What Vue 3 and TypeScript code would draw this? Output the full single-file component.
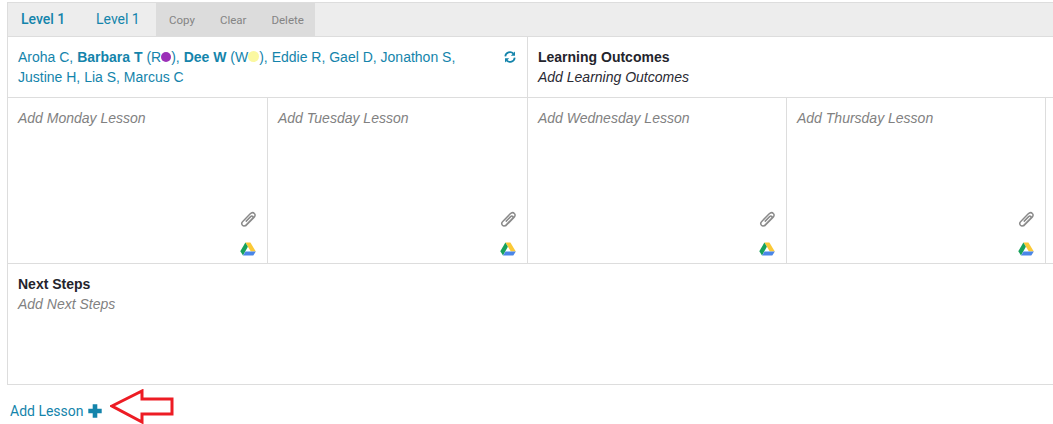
<template>
  <div class="page">
    <div class="planner">
      <div class="tabs">
        <span class="tab active">Level 1</span>
        <span class="tab">Level 1</span>
        <div class="actions">
          <span v-for="a in actions" :key="a" class="action">{{ a }}</span>
        </div>
      </div>

      <div class="top-row">
        <div class="students">
          <p class="names">
            Aroha C, <b>Barbara T</b> (R<i class="dot purple"></i>), <b>Dee W</b> (W<i class="dot yellow"></i>), Eddie R, Gael D, Jonathon S,<br />
            Justine H, Lia S, Marcus C
          </p>
          <svg class="refresh" viewBox="0 0 14 14" width="12" height="12">
            <path d="M1.5 6.2A5.5 5.5 0 0 1 11 3" fill="none" stroke="#1484ab" stroke-width="2" />
            <path d="M12.8 0.6V5.4H8z" fill="#1484ab" />
            <path d="M12.5 7.8A5.5 5.5 0 0 1 3 11" fill="none" stroke="#1484ab" stroke-width="2" />
            <path d="M1.2 13.4V8.6H6z" fill="#1484ab" />
          </svg>
        </div>
        <div class="outcomes">
          <h4>Learning Outcomes</h4>
          <p>Add Learning Outcomes</p>
        </div>
      </div>

      <div class="days">
        <div v-for="d in days" :key="d" class="day">
          <p class="placeholder">Add {{ d }} Lesson</p>
          <div class="day-icons">
            <svg class="clip" viewBox="0 0 16 16" width="17" height="17">
              <path d="M5.2 14.2 12.9 6.4C14.4 4.9 14.6 3.3 13.5 2.3 12.4 1.2 10.8 1.5 9.4 2.9L2.6 9.8C1.5 10.9 1.4 12.4 2.3 13.4 3.3 14.4 4.6 14.2 5.7 13.1L11.7 7C12.4 6.3 12.5 5.5 12 5 11.4 4.5 10.7 4.6 10 5.3L5.4 10" fill="none" stroke="#8a8a8a" stroke-width="1.4" />
            </svg>
            <svg class="drive" viewBox="0 0 16 14" width="16" height="14">
              <path d="M5.4 0.5H10.4L15.8 9.4H10.8z" fill="#fbc937" />
              <path d="M5.4 0.5 7.9 4.8 3 13.4 0.3 9.2z" fill="#17a15b" />
              <path d="M5.6 9.4H15.8L13.3 13.4H3z" fill="#4a86e8" />
            </svg>
          </div>
        </div>
        <div class="day-rest"></div>
      </div>

      <div class="next-steps">
        <h4>Next Steps</h4>
        <p class="placeholder">Add Next Steps</p>
      </div>
    </div>

    <div class="add-lesson">
      Add Lesson
      <svg viewBox="0 0 14 14" width="14" height="14">
        <path d="M4.7 0.3H9.3V4.7H13.7V9.3H9.3V13.7H4.7V9.3H0.3V4.7H4.7z" fill="#1484ab" />
      </svg>
    </div>

    <!-- annotation drawn over the screenshot -->
    <svg class="arrow" viewBox="0 0 66 36" width="66" height="36">
      <path d="M2 17 32 2V10H62V25H32V33z" fill="#fff" stroke="#ed1c24" stroke-width="3" />
    </svg>
  </div>
</template>

<script setup lang="ts">
const actions: string[] = ['Copy', 'Clear', 'Delete']
const days: string[] = ['Monday', 'Tuesday', 'Wednesday', 'Thursday']
</script>

<style>
html,
body {
  background: #fff;
  overflow: hidden;
}
</style>

<style scoped>
.page {
  position: relative;
  width: 1053px;
  height: 424px;
  padding: 2px 0 0 7px;
  box-sizing: border-box;
  font-family: "Liberation Sans", Arial, sans-serif;
  font-size: 14px;
  color: #1484ab;
  overflow: hidden;
}

p,
h4 {
  margin: 0;
}

.planner {
  border-top: 1px solid #ddd;
  border-left: 1px solid #ddd;
  border-bottom: 1px solid #ddd;
}

.tabs {
  display: flex;
  height: 33px;
  background: #ededed;
  border-bottom: 1px solid #ddd;
  font-family: Roboto, sans-serif;
}

.tab {
  box-sizing: border-box;
  padding-left: 13px;
  line-height: 32px;
}

.tab.active {
  width: 75px;
  font-weight: 500;
}

.tab + .tab {
  width: 73px;
}

.actions {
  display: flex;
  gap: 25px;
  width: 159px;
  padding-left: 13px;
  box-sizing: border-box;
  background: #dcdcdc;
}

.action {
  font-size: 11.5px;
  line-height: 34px;
  color: #848484;
}

.top-row {
  display: flex;
  height: 60px;
  border-bottom: 1px solid #ddd;
}

.students {
  position: relative;
  width: 520px;
  padding: 10px 10px 0;
  box-sizing: border-box;
  border-right: 1px solid #ddd;
  line-height: 20px;
}

.dot {
  display: inline-block;
  width: 10px;
  height: 10px;
  border-radius: 50%;
}

.purple {
  background: #9b30b8;
}

.yellow {
  width: 11px;
  height: 11px;
  background: #fbf8a0;
}

.refresh {
  position: absolute;
  top: 14px;
  right: 11px;
}

.outcomes {
  padding: 10px 10px 0;
  line-height: 20px;
}

.outcomes h4,
.next-steps h4 {
  font-size: 14px;
  font-weight: 700;
  color: #24242c;
}

.outcomes p {
  font-style: italic;
  color: #2a2a33;
}

.days {
  display: flex;
  height: 165px;
  border-bottom: 1px solid #ddd;
}

.day {
  display: flex;
  flex-direction: column;
  justify-content: space-between;
  width: 260px;
  padding: 10px 11px 7px 10px;
  box-sizing: border-box;
  border-right: 1px solid #ddd;
}

.day:nth-child(3),
.day:nth-child(4) {
  width: 259px;
}

.day-rest {
  flex: 1;
}

.placeholder {
  font-style: italic;
  color: #818181;
  line-height: 20px;
}

.day-icons {
  display: flex;
  flex-direction: column;
  align-items: flex-end;
  gap: 14px;
}

.clip,
.drive {
  display: block;
}

.clip {
  margin-right: -1px;
}

.next-steps {
  height: 120px;
  padding: 10px 10px 0;
  box-sizing: border-box;
  line-height: 20px;
}

.add-lesson {
  display: flex;
  align-items: center;
  gap: 4px;
  margin: 16px 0 0 3px;
  line-height: 20px;
  font-family: Roboto, sans-serif;
}

.arrow {
  position: absolute;
  left: 110px;
  top: 389px;
}
</style>
